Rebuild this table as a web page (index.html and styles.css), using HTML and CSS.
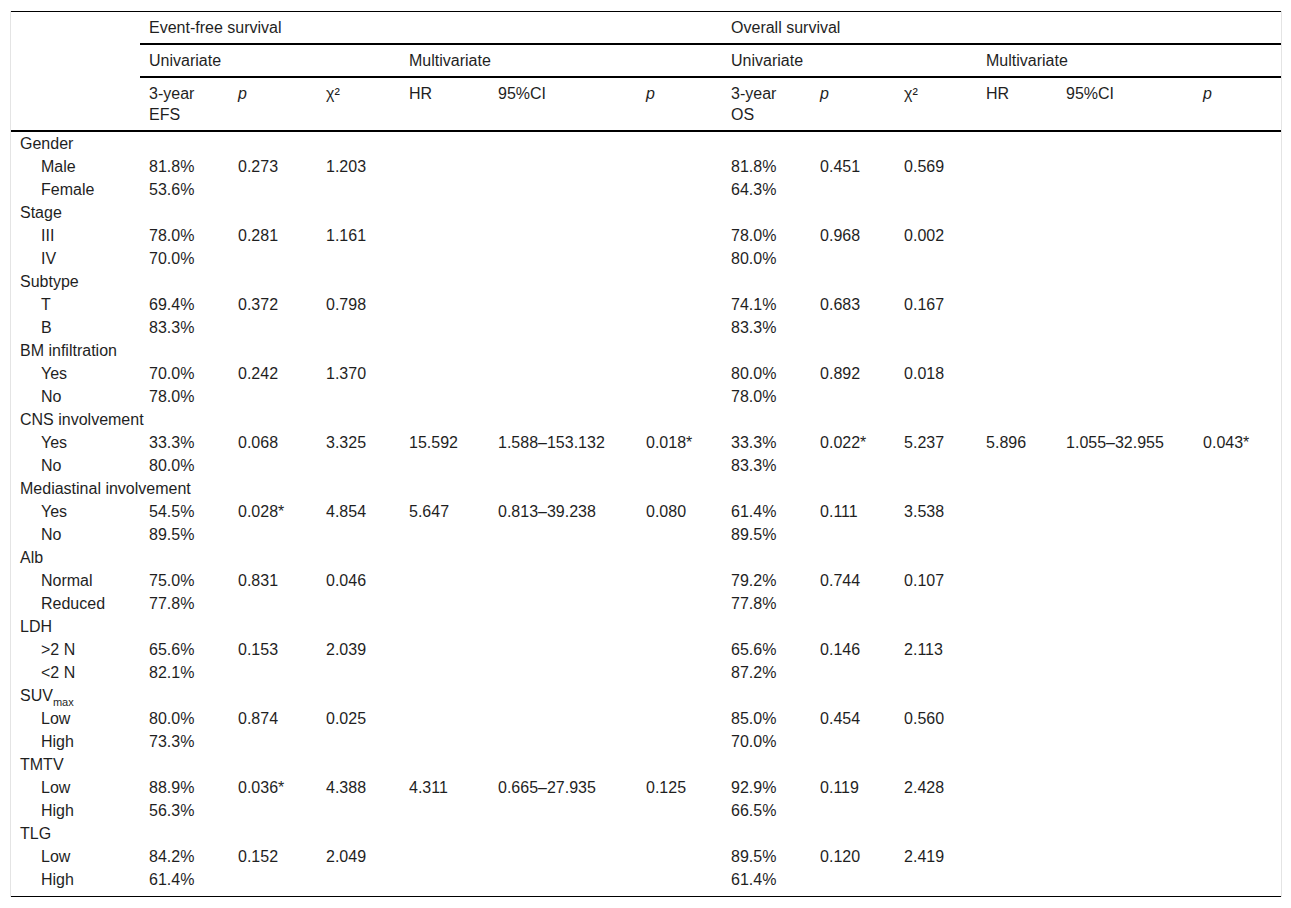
FILE: index.html
```html
<!DOCTYPE html>
<html>
<head>
<meta charset="utf-8">
<link rel="stylesheet" href="styles.css">
</head>
<body>
<div class="wrap">
<table class="tbl">
<colgroup>
<col style="width:129px"><col style="width:89px"><col style="width:88px"><col style="width:83px"><col style="width:89px"><col style="width:148px"><col style="width:85px"><col style="width:89px"><col style="width:84px"><col style="width:82px"><col style="width:80px"><col style="width:137px"><col style="width:87px">
</colgroup>
<thead>
<tr class="h1"><th rowspan="3" class="corner"></th><th colspan="6" class="rule">Event-free survival</th><th colspan="6" class="rule">Overall survival</th></tr>
<tr class="h2"><th colspan="3" class="rule">Univariate</th><th colspan="3" class="rule">Multivariate</th><th colspan="3" class="rule">Univariate</th><th colspan="3" class="rule">Multivariate</th></tr>
<tr class="h3"><th>3-year EFS</th><th><i>p</i></th><th>χ²</th><th>HR</th><th>95%CI</th><th><i>p</i></th><th>3-year OS</th><th><i>p</i></th><th>χ²</th><th>HR</th><th>95%CI</th><th><i>p</i></th></tr>
</thead>
<tbody>
<tr class="grp"><td colspan="13">Gender</td></tr>
<tr><td class="sub">Male</td><td>81.8%</td><td>0.273</td><td>1.203</td><td></td><td></td><td></td><td>81.8%</td><td>0.451</td><td>0.569</td><td></td><td></td><td></td></tr>
<tr><td class="sub">Female</td><td>53.6%</td><td></td><td></td><td></td><td></td><td></td><td>64.3%</td><td></td><td></td><td></td><td></td><td></td></tr>
<tr class="grp"><td colspan="13">Stage</td></tr>
<tr><td class="sub">III</td><td>78.0%</td><td>0.281</td><td>1.161</td><td></td><td></td><td></td><td>78.0%</td><td>0.968</td><td>0.002</td><td></td><td></td><td></td></tr>
<tr><td class="sub">IV</td><td>70.0%</td><td></td><td></td><td></td><td></td><td></td><td>80.0%</td><td></td><td></td><td></td><td></td><td></td></tr>
<tr class="grp"><td colspan="13">Subtype</td></tr>
<tr><td class="sub">T</td><td>69.4%</td><td>0.372</td><td>0.798</td><td></td><td></td><td></td><td>74.1%</td><td>0.683</td><td>0.167</td><td></td><td></td><td></td></tr>
<tr><td class="sub">B</td><td>83.3%</td><td></td><td></td><td></td><td></td><td></td><td>83.3%</td><td></td><td></td><td></td><td></td><td></td></tr>
<tr class="grp"><td colspan="13">BM infiltration</td></tr>
<tr><td class="sub">Yes</td><td>70.0%</td><td>0.242</td><td>1.370</td><td></td><td></td><td></td><td>80.0%</td><td>0.892</td><td>0.018</td><td></td><td></td><td></td></tr>
<tr><td class="sub">No</td><td>78.0%</td><td></td><td></td><td></td><td></td><td></td><td>78.0%</td><td></td><td></td><td></td><td></td><td></td></tr>
<tr class="grp"><td colspan="13">CNS involvement</td></tr>
<tr><td class="sub">Yes</td><td>33.3%</td><td>0.068</td><td>3.325</td><td>15.592</td><td>1.588–153.132</td><td>0.018*</td><td>33.3%</td><td>0.022*</td><td>5.237</td><td>5.896</td><td>1.055–32.955</td><td>0.043*</td></tr>
<tr><td class="sub">No</td><td>80.0%</td><td></td><td></td><td></td><td></td><td></td><td>83.3%</td><td></td><td></td><td></td><td></td><td></td></tr>
<tr class="grp"><td colspan="13">Mediastinal involvement</td></tr>
<tr><td class="sub">Yes</td><td>54.5%</td><td>0.028*</td><td>4.854</td><td>5.647</td><td>0.813–39.238</td><td>0.080</td><td>61.4%</td><td>0.111</td><td>3.538</td><td></td><td></td><td></td></tr>
<tr><td class="sub">No</td><td>89.5%</td><td></td><td></td><td></td><td></td><td></td><td>89.5%</td><td></td><td></td><td></td><td></td><td></td></tr>
<tr class="grp"><td colspan="13">Alb</td></tr>
<tr><td class="sub">Normal</td><td>75.0%</td><td>0.831</td><td>0.046</td><td></td><td></td><td></td><td>79.2%</td><td>0.744</td><td>0.107</td><td></td><td></td><td></td></tr>
<tr><td class="sub">Reduced</td><td>77.8%</td><td></td><td></td><td></td><td></td><td></td><td>77.8%</td><td></td><td></td><td></td><td></td><td></td></tr>
<tr class="grp"><td colspan="13">LDH</td></tr>
<tr><td class="sub">&gt;2 N</td><td>65.6%</td><td>0.153</td><td>2.039</td><td></td><td></td><td></td><td>65.6%</td><td>0.146</td><td>2.113</td><td></td><td></td><td></td></tr>
<tr><td class="sub">&lt;2 N</td><td>82.1%</td><td></td><td></td><td></td><td></td><td></td><td>87.2%</td><td></td><td></td><td></td><td></td><td></td></tr>
<tr class="grp"><td colspan="13">SUV<sub>max</sub></td></tr>
<tr><td class="sub">Low</td><td>80.0%</td><td>0.874</td><td>0.025</td><td></td><td></td><td></td><td>85.0%</td><td>0.454</td><td>0.560</td><td></td><td></td><td></td></tr>
<tr><td class="sub">High</td><td>73.3%</td><td></td><td></td><td></td><td></td><td></td><td>70.0%</td><td></td><td></td><td></td><td></td><td></td></tr>
<tr class="grp"><td colspan="13">TMTV</td></tr>
<tr><td class="sub">Low</td><td>88.9%</td><td>0.036*</td><td>4.388</td><td>4.311</td><td>0.665–27.935</td><td>0.125</td><td>92.9%</td><td>0.119</td><td>2.428</td><td></td><td></td><td></td></tr>
<tr><td class="sub">High</td><td>56.3%</td><td></td><td></td><td></td><td></td><td></td><td>66.5%</td><td></td><td></td><td></td><td></td><td></td></tr>
<tr class="grp"><td colspan="13">TLG</td></tr>
<tr><td class="sub">Low</td><td>84.2%</td><td>0.152</td><td>2.049</td><td></td><td></td><td></td><td>89.5%</td><td>0.120</td><td>2.419</td><td></td><td></td><td></td></tr>
<tr class="last"><td class="sub">High</td><td>61.4%</td><td></td><td></td><td></td><td></td><td></td><td>61.4%</td><td></td><td></td><td></td><td></td><td></td></tr>
</tbody>
</table>
</div>
</body>
</html>
```
FILE: styles.css
```css
html, body {
  margin: 0;
  padding: 0;
  background: #ffffff;
}
body {
  font-family: "Liberation Sans", Arial, sans-serif;
  font-size: 16px;
  color: #1f1f1f;
}
.wrap {
  margin: 11px 0 0 10px;
  width: 1270px;
  border-left: 1px solid #e4e4e4;
  border-right: 1px solid #e4e4e4;
}
.tbl {
  width: 1270px;
  table-layout: fixed;
  border-collapse: collapse;
  border-top: 1px solid #000;
  border-bottom: 1px solid #000;
}
.tbl th {
  font-weight: normal;
  text-align: left;
  vertical-align: top;
  padding: 5px 9px;
  line-height: 21px;
}
.tbl th.rule {
  border-bottom: 2px solid #000;
}
.tbl tr.h3 th {
  border-bottom: 2px solid #000;
}
.tbl th.corner {
  border-bottom: 2px solid #000;
}
.tbl td {
  padding: 1px 9px;
  line-height: 21px;
  vertical-align: top;
  white-space: nowrap;
}
.tbl td.sub {
  padding-left: 30px;
}
.tbl sub {
  font-size: 11px;
  line-height: 0;
  vertical-align: -5px;
}
.tbl tr.last td {
  padding-bottom: 6px;
}
```
